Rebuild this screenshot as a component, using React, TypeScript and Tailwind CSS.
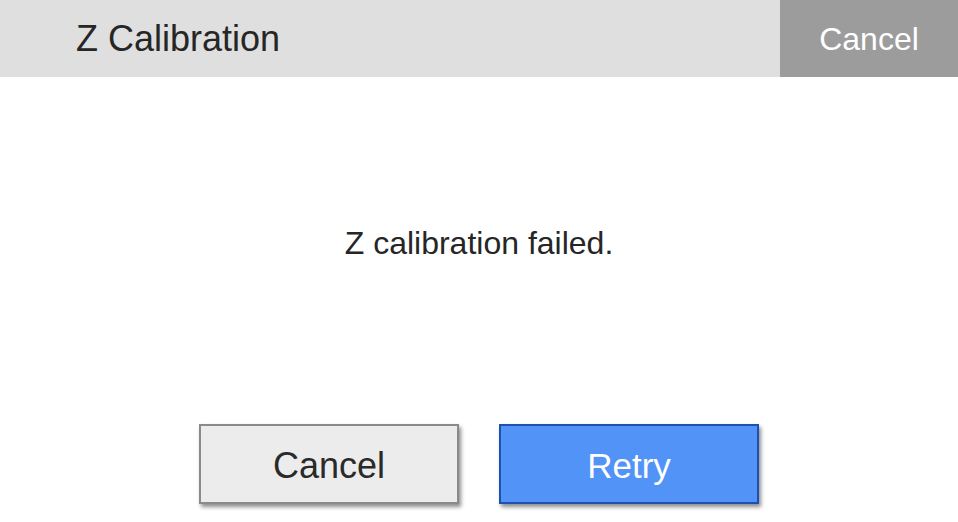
export default function App() {
  return (
    <div
      className="flex h-[522px] w-[958px] flex-col bg-white text-[#222]"
      style={{ fontFamily: '"Liberation Sans", Arial, sans-serif' }}
    >
      {/* Header */}
      <div className="flex h-[77px] shrink-0 items-stretch bg-[#dfdfdf]">
        <div className="flex flex-1 items-center pl-[76px] text-[36px] text-[#262626]">Z Calibration</div>
        <button className="flex w-[178px] items-center justify-center bg-[#9c9c9c] text-[32px] text-white">
          Cancel
        </button>
      </div>

      {/* Message */}
      <div className="flex h-[330px] items-center justify-center pt-[1px] text-[32px] text-[#262626]">
        Z calibration failed.
      </div>

      {/* Actions */}
      <div className="flex justify-center gap-[40px] pt-[17px]">
        <button className="flex h-[80px] w-[260px] items-center justify-center border-2 border-[#8a8a8a] bg-[#ececec] pt-[4px] text-[36px] text-[#2a2a2a] shadow-[2px_3px_4px_rgba(0,0,0,0.45)]">
          Cancel
        </button>
        <button className="flex h-[80px] w-[260px] items-center justify-center border-2 border-[#1f50b0] bg-[#5193f7] pt-[4px] text-[35px] text-white shadow-[2px_3px_4px_rgba(0,0,0,0.45)]">
          Retry
        </button>
      </div>
    </div>
  )
}
